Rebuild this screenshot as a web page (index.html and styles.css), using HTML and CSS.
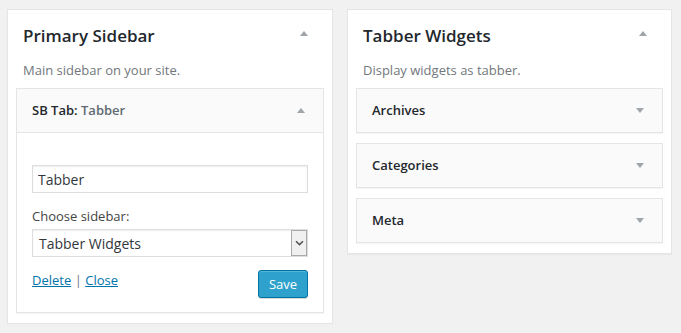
FILE: index.html
```html
<!DOCTYPE html>
<html>
<head>
<meta charset="utf-8">
<link rel="stylesheet" href="styles.css">
</head>
<body>
<div class="holders">
  <div class="sidebar">
    <div class="sidebar-name">
      <h2>Primary Sidebar</h2>
      <span class="arrow up"></span>
    </div>
    <p class="desc">Main sidebar on your site.</p>
    <div class="widget open">
      <div class="widget-top">
        <h3>SB Tab: <span class="in-title">Tabber</span></h3>
        <span class="arrow up small"></span>
      </div>
      <div class="widget-inside">
        <input class="text" type="text" value="Tabber">
        <label class="lbl">Choose sidebar:</label>
        <div class="select">
          <span>Tabber Widgets</span>
          <span class="sel-btn"><svg width="9" height="6" viewBox="0 0 9 6"><path d="M1 1.2 L4.5 4.6 L8 1.2" fill="none" stroke="#555" stroke-width="1.6"/></svg></span>
        </div>
        <div class="controls">
          <div class="links"><a href="#">Delete</a> <span class="sep">|</span> <a href="#">Close</a></div>
          <button class="save">Save</button>
        </div>
      </div>
    </div>
  </div>
  <div class="sidebar short">
    <div class="sidebar-name">
      <h2>Tabber Widgets</h2>
      <span class="arrow up"></span>
    </div>
    <p class="desc">Display widgets as tabber.</p>
    <div class="widget">
      <div class="widget-top"><h3>Archives</h3><span class="arrow down small"></span></div>
    </div>
    <div class="widget">
      <div class="widget-top"><h3>Categories</h3><span class="arrow down small"></span></div>
    </div>
    <div class="widget">
      <div class="widget-top"><h3>Meta</h3><span class="arrow down small"></span></div>
    </div>
  </div>
</div>
</body>
</html>
```
FILE: styles.css
```css
html, body {
  margin: 0;
  padding: 0;
  background: #f1f1f1;
  font-family: "Open Sans", sans-serif;
  color: #444;
}
.holders {
  display: flex;
  align-items: flex-start;
  gap: 14px;
  padding: 9px 0 0 7px;
}
.sidebar {
  width: 308px;
  background: #fff;
  border: 1px solid #e5e5e5;
  box-shadow: 0 1px 1px rgba(0,0,0,.04);
  padding: 0 8px 10px 8px;
}
.sidebar.short { width: 307px; }
.sidebar-name {
  display: flex;
  justify-content: space-between;
  align-items: center;
  padding: 13px 16px 0 7px;
  height: 25px;
}
.sidebar-name h2 {
  margin: 0;
  font-size: 17px;
  font-weight: 600;
  color: #23282d;
}
.sidebar-name .arrow { margin-top: -5px; }
.arrow {
  width: 0;
  height: 0;
  border-left: 4px solid transparent;
  border-right: 4px solid transparent;
}
.arrow.up { border-bottom: 5px solid #a0a5aa; }
.arrow.down { border-top: 5px solid #a0a5aa; }
.desc {
  margin: 0;
  padding: 13px 7px 0 7px;
  height: 27px;
  font-size: 13px;
  color: #72777c;
}
.widget {
  border: 1px solid #e5e5e5;
  background: #fff;
  box-shadow: 0 1px 1px rgba(0,0,0,.04);
  margin-bottom: 10px;
}
.widget:last-child { margin-bottom: 0; }
.widget-top {
  background: #fafafa;
  height: 43px;
  display: flex;
  align-items: center;
  justify-content: space-between;
  padding: 0 18px 0 15px;
}
.widget.open .widget-top { border-bottom: 1px solid #e5e5e5; }
.widget-top h3 {
  margin: -1px 0 0 0;
  font-size: 13px;
  font-weight: 600;
  color: #23282d;
}
.in-title { color: #606a73; }
.widget-inside {
  padding: 32px 15px 14px 15px;
  display: flex;
  flex-direction: column;
}
.text {
  box-sizing: border-box;
  height: 28px;
  width: 100%;
  margin: 0;
  border: 1px solid #ddd;
  box-shadow: inset 0 1px 2px rgba(0,0,0,.07);
  font-family: "Open Sans", sans-serif;
  font-size: 14px;
  color: #32373c;
  padding: 2px 5px;
  outline: none;
}
.lbl {
  font-size: 13px;
  color: #444;
  margin-top: 14px;
  line-height: 18px;
}
.select {
  margin-top: 4px;
  box-sizing: border-box;
  height: 28px;
  border: 1px solid #ddd;
  box-shadow: inset 0 1px 2px rgba(0,0,0,.07);
  display: flex;
  align-items: center;
  justify-content: space-between;
  font-size: 14px;
  color: #32373c;
  padding-left: 6px;
}
.sel-btn {
  width: 16px;
  height: 26px;
  box-sizing: border-box;
  border: 1px solid #aaa;
  background: #f0f0f0;
  display: flex;
  align-items: center;
  justify-content: center;
}
.controls {
  display: flex;
  justify-content: space-between;
  align-items: flex-start;
  margin-top: 10px;
}
.links {
  font-size: 13px;
  color: #72777c;
  line-height: 18px;
  padding-top: 4px;
}
.links a { color: #0073aa; }
.sep { margin: 0; }
.save {
  margin-top: 3px;
  width: 50px;
  height: 28px;
  background: #2ea2cc;
  border: 1px solid #0074a2;
  border-radius: 3px;
  box-shadow: inset 0 1px 0 rgba(120,200,230,.5), 0 1px 0 rgba(0,0,0,.15);
  color: #fff;
  font-family: "Open Sans", sans-serif;
  font-size: 13px;
  padding: 0;
}
```
